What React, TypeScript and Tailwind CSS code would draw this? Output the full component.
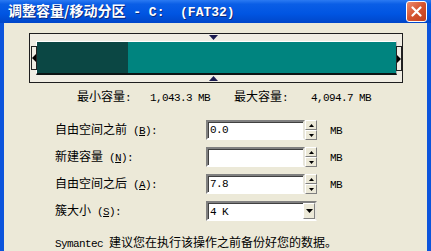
import { FC, ReactNode } from 'react';

// 等幅の半角文字（SimSun 風）
const M: FC<{ children: ReactNode }> = ({ children }) => (
  <span className="font-['Liberation_Mono',monospace] text-[11px] tracking-[-0.6px] whitespace-pre">{children}</span>
);

const SpinBtn: FC<{ up?: boolean }> = ({ up }) => (
  <div className="flex h-[10px] items-center justify-center border border-t-white border-l-white border-b-[#808080] border-r-[#808080] bg-[#ece9d8]">
    <svg width="5" height="3" viewBox="0 0 5 3">
      <polygon points={up ? '2.5,0 5,3 0,3' : '0,0 5,0 2.5,3'} fill="#000" />
    </svg>
  </div>
);

const Field: FC<{ value?: string }> = ({ value }) => (
  <div className="flex h-[20px] w-[99px] items-center border-2 border-t-[#808080] border-l-[#808080] border-b-white border-r-[#e8e6dc] bg-white pl-[2px] shadow-[inset_1px_1px_0_#404040]">
    <M>{value}</M>
  </div>
);

type Row = { label: string; key: string; value?: string; select?: boolean };

const rows: Row[] = [
  { label: '自由空间之前', key: 'B', value: '0.0' },
  { label: '新建容量', key: 'N', value: '' },
  { label: '自由空间之后', key: 'A', value: '7.8' },
  { label: '簇大小', key: 'S', value: '4 K', select: true }
];

export default function App() {
  return (
    <div className="flex h-[251px] w-[431px] flex-col overflow-hidden font-['Noto_Sans_CJK_SC',sans-serif] text-[12px] leading-[14px] text-black">
      {/* タイトルバー */}
      <div className="flex h-[23px] shrink-0 items-center bg-[linear-gradient(to_bottom,#2b7af2_0%,#0a5ee6_18%,#0055e2_60%,#0046c9_100%)] pl-[8px] pr-[4px]">
        <div className="flex-1 text-[14px] font-bold leading-[16px] text-white [text-shadow:1px_1px_0_#0a2a80]">
          调整容量/移动分区<span className="font-['Liberation_Mono',monospace] text-[13px] whitespace-pre"> - C:  (FAT32)</span>
        </div>
        <div className="flex h-[21px] w-[21px] items-center justify-center rounded-[3px] border border-white bg-[linear-gradient(135deg,#ec8c70,#d5532f_50%,#c0401f)]">
          <svg width="11" height="11" viewBox="0 0 11 11">
            <path d="M1.5 1.5 L9.5 9.5 M9.5 1.5 L1.5 9.5" stroke="#fff" strokeWidth="2.2" strokeLinecap="round" />
          </svg>
        </div>
      </div>

      {/* 本体 */}
      <div className="flex-1 border-l-4 border-r-4 border-[#0b54dc] bg-[#ece9d8]">
        {/* パーティションバー */}
        <div className="relative ml-[25px] mt-[10px] flex h-[50px] w-[374px] items-center border border-[#1e1e1e] bg-[#f0ede3]">
          <div className="ml-[6px] flex h-[34px] w-[361px] border-l border-t border-white border-b-2 border-b-[#0c1414] border-r border-r-[#b8b8b8]">
            <div className="w-[91px] bg-[#0b4744]" />
            <div className="flex-1 bg-[#00847f]" />
          </div>
          <div className="absolute left-[1px] top-[12px] flex h-[24px] w-[6px] items-center border border-[#222] bg-[#f0ede3]">
            <svg width="4" height="8" viewBox="0 0 4 8">
              <polygon points="0,4 4,0 4,8" fill="#000" />
            </svg>
          </div>
          <div className="absolute left-[366px] top-[12px] flex h-[25px] w-[6px] items-center border border-[#222] bg-[#f0ede3]">
            <svg width="4" height="8" viewBox="0 0 4 8">
              <polygon points="4,4 0,0 0,8" fill="#000" />
            </svg>
          </div>
          <svg className="absolute left-[179px] top-[1px]" width="9" height="5" viewBox="0 0 9 5">
            <polygon points="0,0 9,0 4.5,5" fill="#1c1c50" />
          </svg>
          <svg className="absolute left-[179px] top-[42px]" width="9" height="5" viewBox="0 0 9 5">
            <polygon points="4.5,0 9,5 0,5" fill="#1c1c50" />
          </svg>
        </div>

        {/* 最小・最大容量 */}
        <div className="mt-[7px] flex h-[14px] items-center pl-[73px]">
          <span className="w-[73px]">最小容量<M>:</M></span>
          <span className="w-[84px]"><M>1,043.3 MB</M></span>
          <span className="w-[77px]">最大容量<M>:</M></span>
          <span><M>4,094.7 MB</M></span>
        </div>

        {/* フォーム */}
        <div className="mt-[16px] flex flex-col gap-[7px] pl-[51px]">
          {rows.map(row => (
            <div key={row.key} className="flex h-[20px] items-center">
              <span className="w-[151px]">
                {row.label}
                <M>
                  {' '}(<u>{row.key}</u>):
                </M>
              </span>
              {row.select ? (
                <div className="flex h-[20px] w-[111px] items-center border-2 border-t-[#808080] border-l-[#808080] border-b-white border-r-[#e8e6dc] bg-white shadow-[inset_1px_1px_0_#404040]">
                  <div className="flex-1 pl-[2px]">
                    <M>{row.value}</M>
                  </div>
                  <div className="flex h-[16px] w-[12px] items-center justify-center border border-t-white border-l-white border-b-[#808080] border-r-[#808080] bg-[#ece9d8]">
                    <svg width="7" height="4" viewBox="0 0 7 4">
                      <polygon points="0,0 7,0 3.5,4" fill="#000" />
                    </svg>
                  </div>
                </div>
              ) : (
                <>
                  <Field value={row.value} />
                  <div className="flex h-[20px] w-[12px] flex-col">
                    <SpinBtn up />
                    <SpinBtn />
                  </div>
                  <span className="ml-[13px]">
                    <M>MB</M>
                  </span>
                </>
              )}
            </div>
          ))}
        </div>

        {/* 注意書き */}
        <div className="mt-[14px] h-[14px] pl-[51px]">
          <M>Symantec </M>建议您在执行该操作之前备份好您的数据。
        </div>
      </div>
    </div>
  );
}
